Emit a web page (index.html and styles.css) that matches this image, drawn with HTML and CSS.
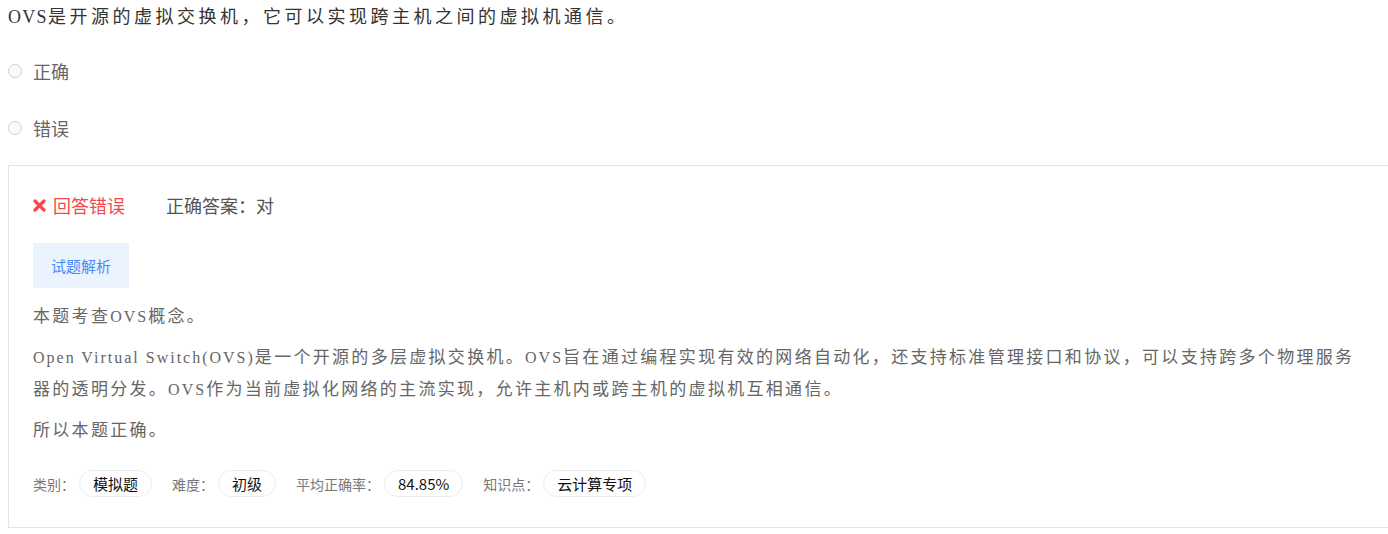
FILE: index.html
```html
<!DOCTYPE html>
<html>
<head>
	<title>OVS</title>
	<link rel="stylesheet" href="styles.css">
</head>
<body>

	<div id="boxQuestion">

		<p class="lblStem"><span class="en">OVS</span>是开源的虚拟交换机，它可以实现跨主机之间的虚拟机通信。</p>

		<div class="boxOptions">
			<div class="boxOption">
				<span class="radio"></span>
				<span>正确</span>
			</div>
			<div class="boxOption">
				<span class="radio"></span>
				<span>错误</span>
			</div>
		</div>

		<div class="boxResult">

			<div class="boxVerdict">
				<span class="lblWrong">
					<svg width="13" height="13" viewBox="0 0 13 13">
						<path d="M2 2 L11 11 M11 2 L2 11" stroke="#f2494c" stroke-width="3.2" stroke-linecap="round"/>
					</svg>
					回答错误
				</span>
				<span class="lblAnswer">正确答案：对</span>
			</div>

			<div class="boxTabs">
				<span class="tab">试题解析</span>
			</div>

			<div class="boxAnalysis">
				<p>本题考查<span class="en">OVS</span>概念。</p>
				<p><span class="en">Open Virtual Switch(OVS)</span>是一个开源的多层虚拟交换机。<span class="en">OVS</span>旨在通过编程实现有效的网络自动化，还支持标准管理接口和协议，可以支持跨多个物理服务器的透明分发。<span class="en">OVS</span>作为当前虚拟化网络的主流实现，允许主机内或跨主机的虚拟机互相通信。</p>
				<p>所以本题正确。</p>
			</div>

			<div class="boxMeta">
				<span class="lblMeta">类别：</span>
				<span class="tag">模拟题</span>
				<span class="lblMeta">难度：</span>
				<span class="tag">初级</span>
				<span class="lblMeta">平均正确率：</span>
				<span class="tag">84.85%</span>
				<span class="lblMeta">知识点：</span>
				<span class="tag">云计算专项</span>
			</div>

		</div>

	</div>

</body>
</html>
```

FILE: styles.css
```css
*{
	margin: 0px;
	padding: 0px;
	box-sizing: border-box;
}

body{
	width: 100vw;
	height: 100vh;
	overflow: hidden;
	background-color: white;
	font-family: "Noto Sans CJK SC", sans-serif;
}

#boxQuestion{
	padding-left: 8px;
}

.lblStem{
	font-family: "Liberation Serif", "Noto Sans CJK SC", serif;
	font-size: 18px;
	line-height: 34px;
	letter-spacing: 3.5px;
	color: #333;
	white-space: nowrap;
}
.lblStem .en{
	letter-spacing: 1.3px;
}

.boxOptions{
	padding-top: 8px;
	margin-bottom: 9px;
}

.boxOption{
	display: flex;
	align-items: center;
	height: 57px;
	font-size: 18px;
	color: #666;
}

.radio{
	width: 14px;
	height: 14px;
	border: 1px solid #d2d2d2;
	border-radius: 50%;
	margin-right: 11px;
	background-color: #fafafa;
}

.boxResult{
	width: 1389px;
	border: 1px solid #e4e4e4;
	padding: 26px 24px 30px 24px;
}

.boxVerdict{
	display: flex;
	align-items: center;
	height: 26px;
	font-size: 18px;
}

.lblWrong{
	display: flex;
	align-items: center;
	gap: 7px;
	color: #f2494c;
	width: 133px;
}

.lblAnswer{
	color: #555;
}

.boxTabs{
	display: flex;
	margin-top: 25px;
}

.tab{
	display: flex;
	align-items: center;
	height: 45px;
	padding: 0px 18px;
	background-color: #ebf3ff;
	color: #4a8af4;
	font-size: 15px;
}

.boxAnalysis{
	margin-top: 13px;
	font-family: "Liberation Serif", "Noto Sans CJK SC", serif;
	font-size: 17px;
	line-height: 32px;
	letter-spacing: 2.3px;
	color: #666;
}
.boxAnalysis .en{
	font-size: 16px;
	letter-spacing: 2px;
}

.boxAnalysis p{
	margin-bottom: 9px;
}

.boxMeta{
	display: flex;
	align-items: center;
	margin-top: 23px;
}

.lblMeta{
	font-size: 14px;
	color: #777;
	margin-right: 4px;
}

.tag{
	display: flex;
	align-items: center;
	height: 27px;
	padding: 0px 13px;
	border: 1px solid #ececec;
	border-radius: 14px;
	font-size: 15px;
	color: #111;
	margin-right: 20px;
}
```
